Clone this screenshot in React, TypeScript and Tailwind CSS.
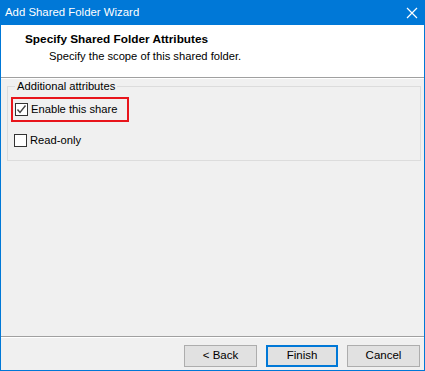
import React from 'react';

const font = { fontFamily: '"Liberation Sans", Arial, sans-serif' };

const CheckBox: React.FC<{ checked?: boolean }> = ({ checked }) => (
  <span className="w-[13px] h-[13px] border border-[#333333] bg-white flex items-center justify-center shrink-0">
    {checked && (
      <svg width="11" height="11" viewBox="0 0 11 11">
        <path d="M1.5 5.5 L4 8.5 L9.5 1.5" fill="none" stroke="#444444" strokeWidth="1.4" />
      </svg>
    )}
  </span>
);

const Button: React.FC<{ label: string; primary?: boolean }> = ({ label, primary }) => (
  <button
    className={
      primary
        ? 'w-[72px] h-[22px] bg-[#e1e1e1] border-2 border-[#0078d7] text-[11.5px] text-black'
        : 'w-[73px] h-[22px] bg-[#e1e1e1] border border-[#adadad] text-[11.5px] text-black'
    }
  >
    {label}
  </button>
);

const App: React.FC = () => {
  return (
    <div style={font} className="w-[425px] h-[371px] flex flex-col bg-[#f0f0f0] border border-[#0078d7] text-[11.2px] text-black overflow-hidden">
      {/* TITLE BAR */}
      <div className="h-[24px] bg-[#0078d7] text-white flex items-center justify-between pl-[4px] pr-[6px] shrink-0">
        <span className="text-[11.4px]">Add Shared Folder Wizard</span>
        <svg width="12" height="12" viewBox="0 0 12 12">
          <path d="M1 1 L11 11 M11 1 L1 11" stroke="white" strokeWidth="1.2" />
        </svg>
      </div>

      {/* HEADER */}
      <div className="h-[52px] bg-white flex flex-col pt-[7px] pl-[24px] shrink-0">
        <span className="font-bold text-[11.8px] leading-[15px]">Specify Shared Folder Attributes</span>
        <span className="pl-[24px] mt-[2px] leading-[15px]">Specify the scope of this shared folder.</span>
      </div>
      <div className="h-[1px] bg-[#a0a0a0] shrink-0" />
      <div className="h-[1px] bg-white shrink-0" />

      {/* BODY */}
      <div className="flex-1 pl-[6px] pr-[3px]">
        <fieldset className="border border-[#dcdcdc] h-[82px] pl-[7px] pr-[2px]">
          <legend className="px-[2px] leading-[15px]">Additional attributes</legend>
          <div className="flex flex-col">
            <div className="mt-[3px] ml-[-4px] w-[118px] h-[25px] border-2 border-[#e8151b] flex items-center gap-[3px] pl-[2px]">
              <CheckBox checked />
              <span>Enable this share</span>
            </div>
            <div className="mt-[10px] ml-[-1px] flex items-center gap-[3px]">
              <CheckBox />
              <span>Read-only</span>
            </div>
          </div>
        </fieldset>
      </div>

      {/* FOOTER */}
      <div className="h-[1px] bg-[#a0a0a0] shrink-0" />
      <div className="h-[1px] bg-white shrink-0" />
      <div className="h-[32px] flex items-start justify-end gap-[9px] pt-[7px] pr-[4px] shrink-0">
        <Button label="< Back" />
        <Button label="Finish" primary />
        <Button label="Cancel" />
      </div>
    </div>
  );
};

export default App;
